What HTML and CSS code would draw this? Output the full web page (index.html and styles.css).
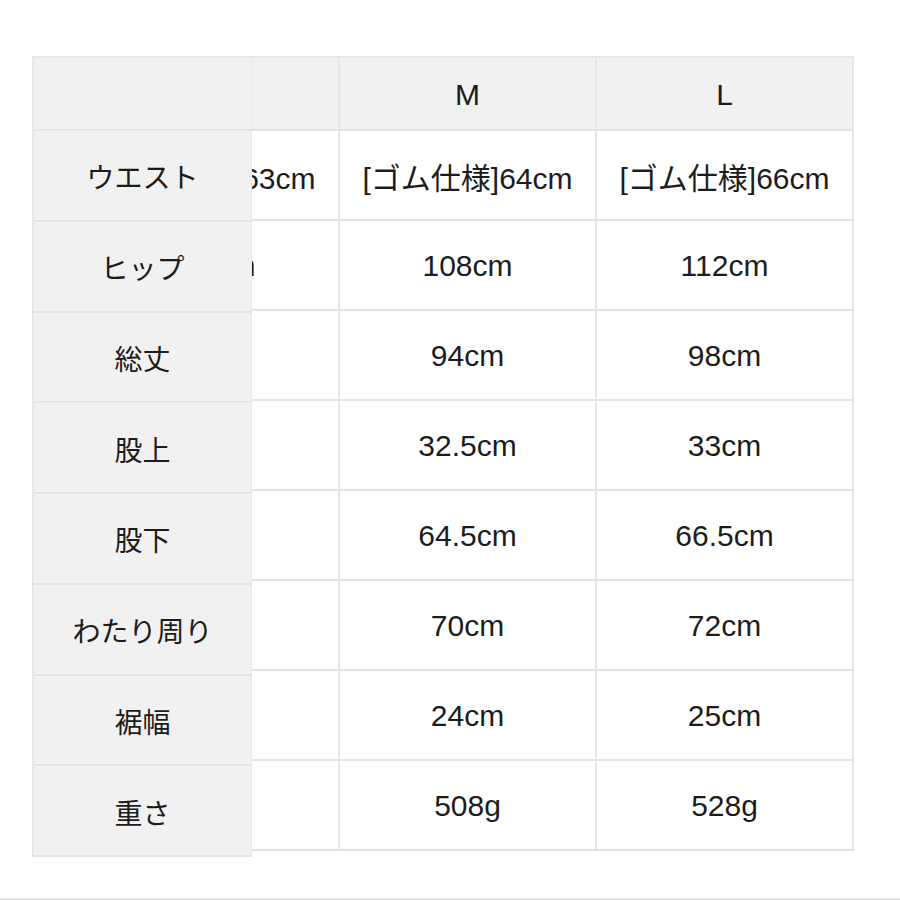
FILE: index.html
```html
<!DOCTYPE html>
<html lang="ja">
<head>
<meta charset="utf-8">
<title>サイズ表</title>
<link rel="stylesheet" href="styles.css">
</head>
<body>
<div class="page">
  <div class="size-table">
    <div class="labels">
      <div class="label head"></div>
      <div class="label">ウエスト</div>
      <div class="label">ヒップ</div>
      <div class="label">総丈</div>
      <div class="label">股上</div>
      <div class="label">股下</div>
      <div class="label">わたり周り</div>
      <div class="label">裾幅</div>
      <div class="label">重さ</div>
    </div>
    <div class="viewport">
      <div class="grid">
        <div class="cell head">S</div><div class="cell head">M</div><div class="cell head">L</div>
        <div class="cell">[ゴム仕様]63cm</div><div class="cell">[ゴム仕様]64cm</div><div class="cell">[ゴム仕様]66cm</div>
        <div class="cell">104cm</div><div class="cell">108cm</div><div class="cell">112cm</div>
        <div class="cell">90cm</div><div class="cell">94cm</div><div class="cell">98cm</div>
        <div class="cell">32cm</div><div class="cell">32.5cm</div><div class="cell">33cm</div>
        <div class="cell">62cm</div><div class="cell">64.5cm</div><div class="cell">66.5cm</div>
        <div class="cell">68cm</div><div class="cell">70cm</div><div class="cell">72cm</div>
        <div class="cell">23cm</div><div class="cell">24cm</div><div class="cell">25cm</div>
        <div class="cell">488g</div><div class="cell">508g</div><div class="cell">528g</div>
      </div>
    </div>
  </div>
  <div class="divider"></div>
</div>
</body>
</html>
```

FILE: styles.css
```css
html, body {
  margin: 0;
  padding: 0;
  background: #ffffff;
}

body {
  font-family: "Liberation Sans", "Noto Sans CJK JP", sans-serif;
  color: #1c1c1c;
}

.page {
  width: 900px;
  height: 900px;
  display: flex;
  flex-direction: column;
  overflow: hidden;
}

.size-table {
  display: flex;
  align-items: flex-start;
  width: 822px;
  margin: 56px 0 0 32px;
}

.labels {
  flex: 0 0 220px;
  display: flex;
  flex-direction: column;
  background: #f1f1f1;
  border-top: 2px solid #e6e6e6;
  border-left: 2px solid #e6e6e6;
  box-sizing: border-box;
  position: relative;
  z-index: 1;
}

.label {
  height: 90.75px;
  box-sizing: border-box;
  border-bottom: 2px solid #e4e4e4;
  border-right: 1px solid #e8e8e8;
  display: flex;
  align-items: center;
  justify-content: center;
  font-size: 28px;
  padding-top: 2px;
}

.label.head {
  height: 73px;
}

.viewport {
  flex: 1 1 auto;
  min-width: 0;
  overflow: hidden;
  display: flex;
  justify-content: flex-end;
}

.grid {
  flex: 0 0 auto;
  display: grid;
  grid-template-columns: repeat(3, 257px);
  grid-template-rows: 73px repeat(8, 90px);
  border-top: 2px solid #e6e6e6;
  box-sizing: border-box;
}

.cell {
  box-sizing: border-box;
  border-right: 2px solid #e6e6e6;
  border-bottom: 2px solid #e3e3e3;
  display: flex;
  align-items: center;
  justify-content: center;
  font-size: 30px;
  white-space: nowrap;
  padding-top: 2px;
  background: #ffffff;
}

.cell.head {
  background: #f1f1f1;
  border-right-color: #e8e8e8;
}

.divider {
  margin-top: auto;
  height: 2px;
  background: #e2e2e2;
  flex: 0 0 2px;
}
```
